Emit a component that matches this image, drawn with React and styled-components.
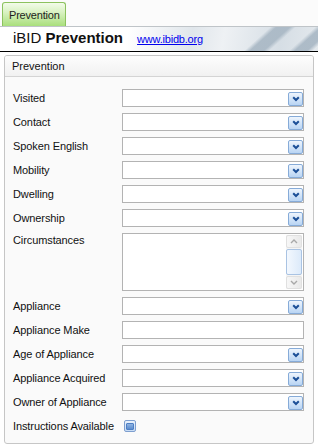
import React from 'react';
import styled, { createGlobalStyle } from 'styled-components';

const GlobalStyle = createGlobalStyle`
    html, body {
        margin: 0;
        padding: 0;
        background: #ffffff;
    }
    body {
        font-family: "Liberation Sans", Arial, sans-serif;
        font-size: 11px;
        color: #000;
    }
`;

const Page = styled.div`
    width: 318px;
    height: 447px;
    overflow: hidden;
`;

const TabBar = styled.div`
    height: 25px;
    padding: 1px 0 0 2px;
    display: flex;
    align-items: flex-end;
    background: #fbfbfb;
    border-bottom: 1px solid #bfc4c8;
`;

const Tab = styled.div`
    height: 24px;
    padding: 0 5px 0 6px;
    display: flex;
    align-items: center;
    border: 1px solid #8cc25e;
    border-bottom: none;
    border-radius: 3px 3px 0 0;
    background: linear-gradient(to bottom, #f3fbea 0%, #d9f2c2 40%, #a9df7c 100%);
    color: #1d1d1d;
    font-size: 11px;
    letter-spacing: -0.2px;
    box-sizing: border-box;
`;

const Header = styled.div`
    height: 25px;
    display: flex;
    align-items: flex-end;
    padding: 0 0 6px 13px;
    box-sizing: border-box;
    border-bottom: 1px solid #000;
    background:
        linear-gradient(138deg, transparent 181px, rgba(168, 183, 196, 0.9) 185px, rgba(168, 183, 196, 0.9) 194px, transparent 198px),
        linear-gradient(138deg, transparent 211px, rgba(168, 183, 196, 0.9) 215px, rgba(168, 183, 196, 0.9) 223px, transparent 227px),
        linear-gradient(160deg, transparent 140px, rgba(206, 215, 223, 0.9) 185px, rgba(240, 243, 245, 0.6) 215px, transparent 240px),
        linear-gradient(100deg, #ffffff 0%, #ffffff 40%, #e0e6eb 60%, #eef1f4 70%, #d6dee5 88%, #e4e9ed 100%);
`;

const Title = styled.div`
    font-size: 15px;
    line-height: 15px;
    color: #111;
    white-space: nowrap;

    b {
        font-weight: bold;
    }
`;

const SiteLink = styled.a`
    margin-left: 14px;
    font-size: 11px;
    line-height: 12px;
    color: #0000ee;
    text-decoration: underline;
    letter-spacing: -0.2px;
`;

const Panel = styled.div`
    margin: 3px 4px 0 4px;
    height: 389px;
    box-sizing: border-box;
    border: 1px solid #c6c6c6;
    border-radius: 3px;
    background: #fafafa;
    overflow: hidden;
`;

const PanelHeader = styled.div`
    height: 20px;
    padding-left: 7px;
    display: flex;
    align-items: center;
    border-bottom: 1px solid #d4d4d4;
    background: linear-gradient(to bottom, #fdfdfd, #f1f1f1);
    color: #111;
`;

const PanelBody = styled.div`
    padding: 12px 9px 9px 8px;
    display: flex;
    flex-direction: column;
    gap: 6px;
`;

const Row = styled.div`
    display: grid;
    grid-template-columns: 109px 1fr;
    align-items: ${p => (p.$top ? 'start' : 'center')};
    min-height: 18px;
`;

const Label = styled.div`
    color: #111;
    line-height: 13px;
    padding-top: ${p => (p.$top ? '1px' : '0')};
    white-space: nowrap;
    letter-spacing: -0.1px;
`;

const SelectBox = styled.div`
    height: 18px;
    box-sizing: border-box;
    border: 1px solid #b3b3b3;
    background: #fff;
    display: flex;
    justify-content: flex-end;
    align-items: flex-end;
`;

const DropButton = styled.div`
    width: 15px;
    height: 14px;
    box-sizing: border-box;
    border: 1px solid #86abd8;
    border-radius: 2px;
    background: linear-gradient(to bottom, #eef5fd 0%, #d3e5f9 50%, #b8d4f3 100%);
    display: flex;
    align-items: center;
    justify-content: center;
`;

const TextInput = styled.input`
    height: 18px;
    box-sizing: border-box;
    border: 1px solid #b3b3b3;
    background: #fff;
    margin: 0;
    padding: 0 3px;
    font: inherit;
    outline: none;
`;

const TextAreaBox = styled.div`
    height: 58px;
    box-sizing: border-box;
    border: 1px solid #b3b3b3;
    background: #fff;
    display: flex;
`;

const TextArea = styled.textarea`
    flex: 1;
    border: none;
    resize: none;
    outline: none;
    margin: 0;
    padding: 2px 3px;
    font: inherit;
    overflow: hidden;
`;

const ScrollBar = styled.div`
    width: 16px;
    margin: 1px 1px 1px 0;
    display: flex;
    flex-direction: column;
    background: #f4f4f4;
`;

const ScrollArrow = styled.div`
    height: 13px;
    display: flex;
    align-items: center;
    justify-content: center;
    background: linear-gradient(to right, #f7f7f7, #e9e9e9);
    border: 1px solid #e0e0e0;
    border-radius: 2px;
    box-sizing: border-box;
`;

const ScrollThumb = styled.div`
    flex: 1;
    margin: 1px 0;
    box-sizing: border-box;
    border: 1px solid #a9c3e3;
    border-radius: 2px;
    background: linear-gradient(to right, #f3f8fe, #dceafa);
`;

const CheckBox = styled.div`
    width: 12px;
    height: 12px;
    margin-left: 2px;
    box-sizing: border-box;
    border: 1px solid #7e9fcf;
    border-radius: 2px;
    background: linear-gradient(to bottom, #eaf2fc, #c7dbf4);
    display: flex;
    align-items: center;
    justify-content: center;
`;

const CheckMark = styled.div`
    width: 6px;
    height: 5px;
    background: linear-gradient(to bottom, #8fb3e2, #5a8ccf);
    border: 1px solid #4e7fc4;
    border-radius: 1px;
`;

const Chevron = () => (
    <svg width="8" height="6" viewBox="0 0 8 6">
        <path d="M1.2 1.2 L4 4 L6.8 1.2" fill="none" stroke="#1c4f97" strokeWidth="2" />
    </svg>
);

const Arrow = ({ up }) => (
    <svg width="8" height="5" viewBox="0 0 8 5">
        <path d={up ? 'M1 4 L4 1 L7 4' : 'M1 1 L4 4 L7 1'} fill="none" stroke="#a8a8a8" strokeWidth="1.4" />
    </svg>
);

const Select = () => (
    <SelectBox>
        <DropButton>
            <Chevron />
        </DropButton>
    </SelectBox>
);

const firstFields = ['Visited', 'Contact', 'Spoken English', 'Mobility', 'Dwelling', 'Ownership'];
const lastFields = ['Age of Appliance', 'Appliance Acquired', 'Owner of Appliance'];

export default function App() {
    return (
        <Page>
            <GlobalStyle />
            <TabBar>
                <Tab>Prevention</Tab>
            </TabBar>
            <Header>
                <Title>
                    iBID <b>Prevention</b>
                </Title>
                <SiteLink href="#">www.ibidb.org</SiteLink>
            </Header>
            <Panel>
                <PanelHeader>Prevention</PanelHeader>
                <PanelBody>
                    {firstFields.map(name => (
                        <Row key={name}>
                            <Label>{name}</Label>
                            <Select />
                        </Row>
                    ))}
                    <Row $top>
                        <Label $top>Circumstances</Label>
                        <TextAreaBox>
                            <TextArea />
                            <ScrollBar>
                                <ScrollArrow>
                                    <Arrow up />
                                </ScrollArrow>
                                <ScrollThumb />
                                <ScrollArrow>
                                    <Arrow />
                                </ScrollArrow>
                            </ScrollBar>
                        </TextAreaBox>
                    </Row>
                    <Row>
                        <Label>Appliance</Label>
                        <Select />
                    </Row>
                    <Row>
                        <Label>Appliance Make</Label>
                        <TextInput type="text" />
                    </Row>
                    {lastFields.map(name => (
                        <Row key={name}>
                            <Label>{name}</Label>
                            <Select />
                        </Row>
                    ))}
                    <Row>
                        <Label>Instructions Available</Label>
                        <CheckBox>
                            <CheckMark />
                        </CheckBox>
                    </Row>
                </PanelBody>
            </Panel>
        </Page>
    );
}
